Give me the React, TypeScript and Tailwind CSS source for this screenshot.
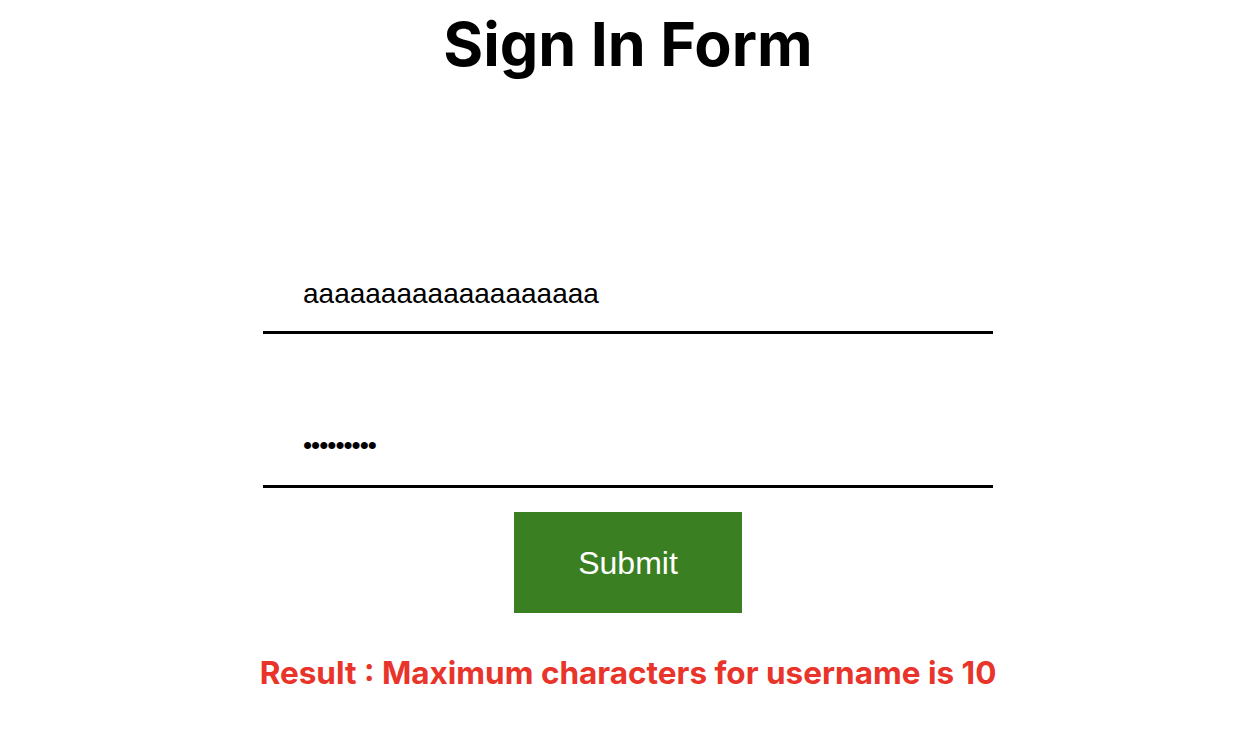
import React, { useState } from 'react';

export default function App() {
  const [username, setUsername] = useState<string>('aaaaaaaaaaaaaaaaaaa');
  const [password, setPassword] = useState<string>('123456789');
  const [result, setResult] = useState<string>('Maximum characters for username is 10');

  const handleSubmit = (e: React.FormEvent) => {
    e.preventDefault();
    if (username.length > 10) {
      setResult('Maximum characters for username is 10');
    } else {
      setResult('Signed in');
    }
  };

  return (
    <main className="flex min-h-screen flex-col items-center bg-white pr-[4px]">
      <h1 className="mt-[9px] text-[61px] font-bold leading-[70px] text-black [font-family:Inter,sans-serif]">
        Sign In Form
      </h1>
      <form onSubmit={handleSubmit} className="mt-[199px] flex w-[730px] flex-col items-center">
        <input
          type="text"
          value={username}
          onChange={(e) => setUsername(e.target.value)}
          className="h-[56px] w-full border-b-[3px] border-black px-10 pb-[21px] text-[28px] text-black outline-none [font-family:'Liberation_Sans',Arial,sans-serif]"
        />
        <input
          type="password"
          value={password}
          onChange={(e) => setPassword(e.target.value)}
          className="mt-[98px] h-[56px] w-full border-b-[3px] border-black px-10 pb-[26px] text-[26px] tracking-[-1px] text-black outline-none [font-family:'Liberation_Sans',Arial,sans-serif]"
        />
        <button
          type="submit"
          className="mt-[24px] h-[101px] w-[228px] bg-[#3a7f22] text-[32px] text-white [font-family:'Liberation_Sans',Arial,sans-serif]"
        >
          Submit
        </button>
      </form>
      <p className="mt-[36px] text-[31.5px] font-bold text-[#e8342a] [font-family:Inter,sans-serif]">
        Result : {result}
      </p>
    </main>
  );
}
